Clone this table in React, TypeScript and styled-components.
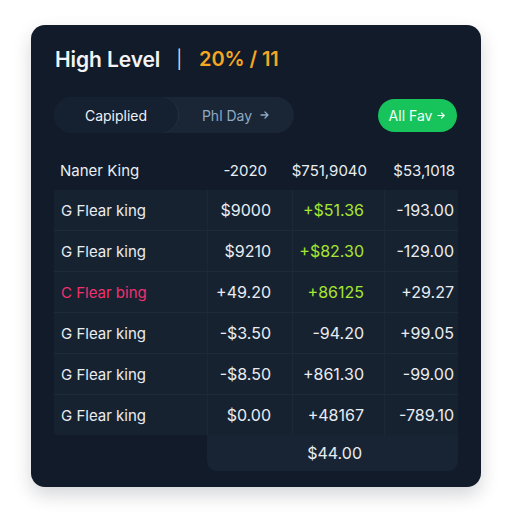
import React from "react";
import styled, { createGlobalStyle } from "styled-components";

const Global = createGlobalStyle`
  html, body { margin: 0; padding: 0; background: #ffffff; }
  body { font-family: Inter, "Open Sans", "Liberation Sans", sans-serif; }
`;

const Page = styled.div`
  width: 512px;
  height: 512px;
  padding: 25px 0 0 31px;
  box-sizing: border-box;
`;

const Card = styled.div`
  width: 450px;
  height: 462px;
  box-sizing: border-box;
  background: #111b29;
  border-radius: 14px;
  box-shadow: 0 8px 18px rgba(20, 30, 45, 0.18);
  padding: 22px 23px 15px;
  display: flex;
  flex-direction: column;
`;

const TitleRow = styled.div`
  display: flex;
  align-items: center;
  height: 24px;
  padding-left: 1px;
  font-size: 21px;
  font-weight: 600;
  letter-spacing: -0.1px;
`;

const Title = styled.span`
  color: #f2f4f7;
`;

const Sep = styled.span`
  color: #d3d7dd;
  font-weight: 400;
  margin: 0 17px 0 16px;
  font-size: 18px;
`;

const Accent = styled.span`
  color: #f5a623;
  font-weight: 600;
  font-size: 20px;
`;

const Toolbar = styled.div`
  margin-top: 26px;
  height: 36px;
  display: flex;
  justify-content: space-between;
  align-items: center;
`;

const Segmented = styled.div`
  width: 240px;
  height: 36px;
  border-radius: 18px;
  background: #1a2535;
  display: flex;
  align-items: center;
`;

const Segment = styled.div<{ $active?: boolean }>`
  height: 36px;
  border-radius: 18px;
  display: flex;
  align-items: center;
  justify-content: center;
  gap: 8px;
  font-size: 14px;
  width: ${(p) => (p.$active ? "124px" : "116px")};
  background: ${(p) => (p.$active ? "#152030" : "transparent")};
  box-shadow: ${(p) => (p.$active ? "1px 0 0 #223043" : "none")};
  color: ${(p) => (p.$active ? "#eef1f5" : "#8eaac4")};
`;

const GreenButton = styled.button`
  width: 79px;
  height: 33px;
  border: none;
  border-radius: 17px;
  background: #17c45b;
  color: #f1fff6;
  font-family: inherit;
  font-size: 14px;
  display: flex;
  align-items: center;
  justify-content: center;
  gap: 5px;
  padding: 0;
  margin-right: 1px;
`;

const Table = styled.div`
  margin-top: 17px;
  display: flex;
  flex-direction: column;
`;

const cols = "153px 85px 92px 74px";

const HeaderRow = styled.div`
  display: grid;
  grid-template-columns: ${cols};
  height: 40px;
  align-items: center;
  color: #e8ecf1;
`;

const Body = styled.div`
  background: #172231;
  border-radius: 2px 2px 0 4px;
`;

const Row = styled.div`
  display: grid;
  grid-template-columns: ${cols};
  height: 41px;
  border-bottom: 1px solid #1d2a3a;
  box-sizing: border-box;
  &:last-child { border-bottom: none; height: 40px; }
`;

const Cell = styled.div<{ $pr: number; $name?: boolean; $color?: string }>`
  display: flex;
  align-items: center;
  justify-content: ${(p) => (p.$name ? "flex-start" : "flex-end")};
  padding: ${(p) => (p.$name ? "0 0 0 7px" : `0 ${p.$pr}px 0 0`)};
  font-size: ${(p) => (p.$name ? "15px" : "16px")};
  color: ${(p) => p.$color || "#e9edf2"};
  border-left: ${(p) => (p.$name ? "none" : "1px solid #1c2838")};
  height: 100%;
  box-sizing: border-box;
  white-space: nowrap;
`;

const HeadCell = styled(Cell)`
  border-left: none;
  font-size: 15px;
`;

const FooterRow = styled.div`
  display: grid;
  grid-template-columns: ${cols};
  height: 36px;
`;

const FooterCell = styled.div`
  grid-column: 2 / span 3;
  background: #182434;
  border-radius: 0 0 10px 10px;
  display: grid;
  grid-template-columns: 85px 92px 74px;
`;

const FooterValue = styled.div`
  grid-column: 2;
  display: flex;
  align-items: center;
  justify-content: flex-end;
  padding-right: 22px;
  font-size: 16px;
  color: #e9edf2;
`;

const Arrow = ({ size = 10 }: { size?: number }) => (
  <svg width={size} height={size} viewBox="0 0 10 10" fill="none">
    <path d="M1 5h7M5 2l3 3-3 3" stroke="currentColor" strokeWidth="1.3" strokeLinecap="round" strokeLinejoin="round" />
  </svg>
);

const LIME = "#a6e632";
const PINK = "#f0306f";

const rows: { name: string; nameColor?: string; v: [string, string, string]; c?: [string?, string?, string?] }[] = [
  { name: "G Flear king", v: ["$9000", "+$51.36", "-193.00"], c: [undefined, LIME] },
  { name: "G Flear king", v: ["$9210", "+$82.30", "-129.00"], c: [undefined, LIME] },
  { name: "C Flear bing", nameColor: PINK, v: ["+49.20", "+86125", "+29.27"], c: [undefined, LIME] },
  { name: "G Flear king", v: ["-$3.50", "-94.20", "+99.05"] },
  { name: "G Flear king", v: ["-$8.50", "+861.30", "-99.00"] },
  { name: "G Flear king", v: ["$0.00", "+48167", "-789.10"] },
];

const pads = [21, 20, 4];

export default function App() {
  return (
    <>
      <Global />
      <Page>
        <Card>
          <TitleRow>
            <Title>High Level</Title>
            <Sep>|</Sep>
            <Accent>20% / 11</Accent>
          </TitleRow>
          <Toolbar>
            <Segmented>
              <Segment $active>Capiplied</Segment>
              <Segment>
                Phl Day <Arrow />
              </Segment>
            </Segmented>
            <GreenButton>
              All Fav <Arrow size={9} />
            </GreenButton>
          </Toolbar>
          <Table>
            <HeaderRow>
              <HeadCell $pr={0} $name style={{ paddingLeft: 6 }}>Naner King</HeadCell>
              <HeadCell $pr={25}>-2020</HeadCell>
              <HeadCell $pr={17}>$751,9040</HeadCell>
              <HeadCell $pr={3}>$53,1018</HeadCell>
            </HeaderRow>
            <Body>
              {rows.map((r, i) => (
                <Row key={i}>
                  <Cell $pr={0} $name $color={r.nameColor}>{r.name}</Cell>
                  {r.v.map((val, j) => (
                    <Cell key={j} $pr={pads[j]} $color={r.c?.[j]}>{val}</Cell>
                  ))}
                </Row>
              ))}
            </Body>
            <FooterRow>
              <FooterCell>
                <FooterValue>$44.00</FooterValue>
              </FooterCell>
            </FooterRow>
          </Table>
        </Card>
      </Page>
    </>
  );
}
